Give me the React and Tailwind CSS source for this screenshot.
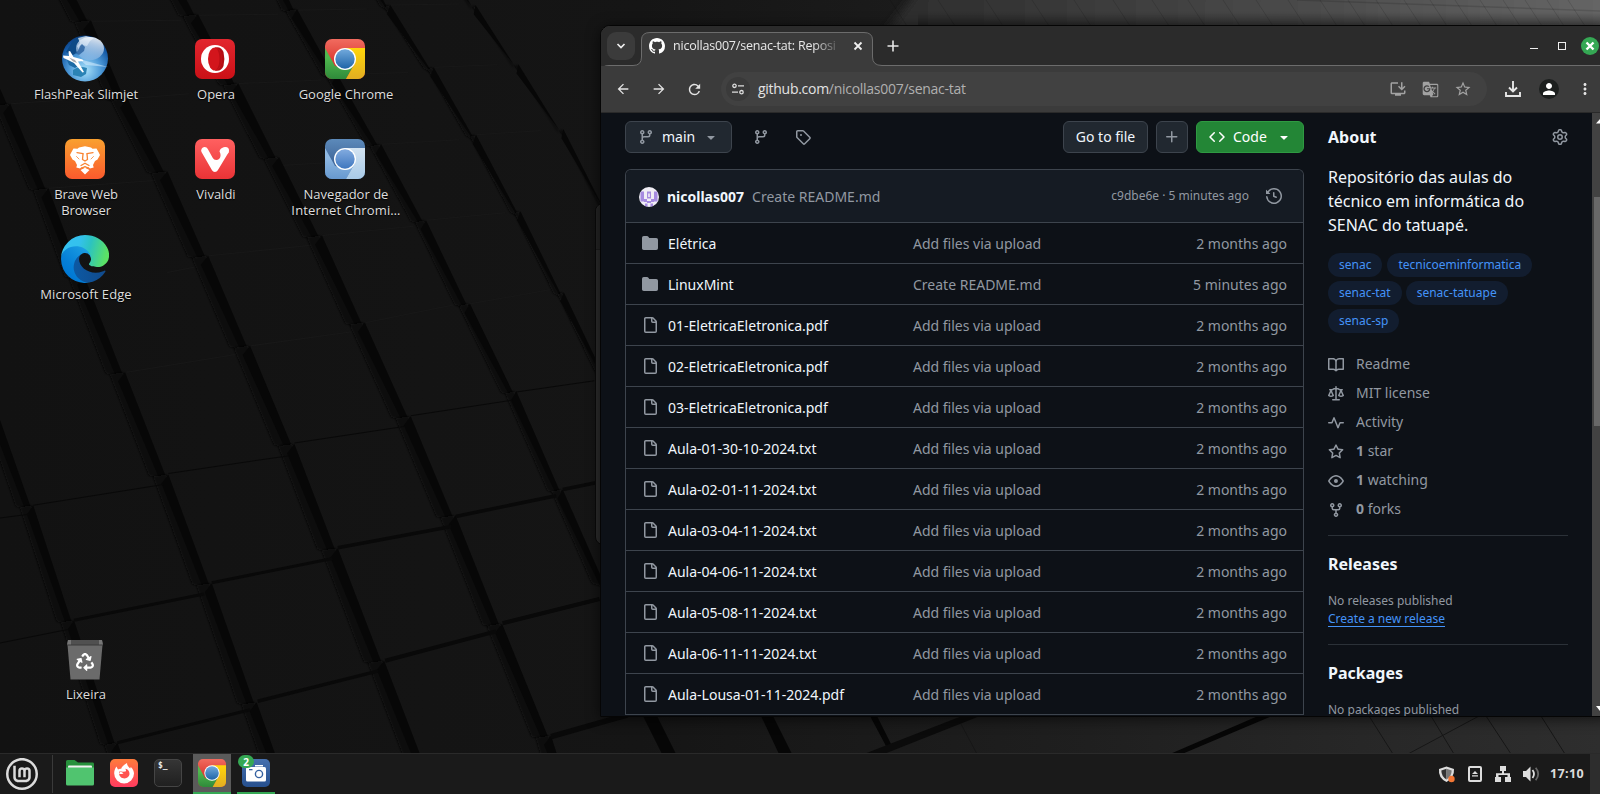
import React from "react";
import { MdArrowBack, MdArrowForward, MdRefresh, MdGTranslate, MdInstallDesktop, MdStarBorder, MdPerson, MdMoreVert } from "react-icons/md";
import { FaRecycle } from "react-icons/fa";
import { SiLinuxmint } from "react-icons/si";

const octicons = {
  branch: "M9.5 3.25a2.25 2.25 0 1 1 3 2.122V6A2.5 2.5 0 0 1 10 8.5H6a1 1 0 0 0-1 1v1.128a2.251 2.251 0 1 1-1.5 0V5.372a2.25 2.25 0 1 1 1.5 0v1.836A2.493 2.493 0 0 1 6 7h4a1 1 0 0 0 1-1v-.628A2.25 2.25 0 0 1 9.5 3.25Zm-6 0a.75.75 0 1 0 1.5 0 .75.75 0 0 0-1.5 0Zm8.25-.75a.75.75 0 1 0 0 1.5.75.75 0 0 0 0-1.5ZM4.25 12a.75.75 0 1 0 0 1.5.75.75 0 0 0 0-1.5Z",
  tag: "M1 7.775V2.75C1 1.784 1.784 1 2.75 1h5.025c.464 0 .91.184 1.238.513l6.25 6.25a1.75 1.75 0 0 1 0 2.474l-5.026 5.026a1.75 1.75 0 0 1-2.474 0l-6.25-6.25A1.752 1.752 0 0 1 1 7.775Zm1.5 0c0 .066.026.13.073.177l6.25 6.25a.25.25 0 0 0 .354 0l5.025-5.025a.25.25 0 0 0 0-.354l-6.25-6.25a.25.25 0 0 0-.177-.073H2.75a.25.25 0 0 0-.25.25ZM6 5a1 1 0 1 1 0 2 1 1 0 0 1 0-2Z",
  plus: "M7.75 2a.75.75 0 0 1 .75.75V7h4.25a.75.75 0 0 1 0 1.5H8.5v4.25a.75.75 0 0 1-1.5 0V8.5H2.75a.75.75 0 0 1 0-1.5H7V2.75A.75.75 0 0 1 7.75 2Z",
  code: "m11.28 3.22 4.25 4.25a.75.75 0 0 1 0 1.06l-4.25 4.25a.749.749 0 0 1-1.275-.326.749.749 0 0 1 .215-.734L13.94 8l-3.72-3.72a.749.749 0 0 1 .326-1.275.749.749 0 0 1 .734.215Zm-6.56 0a.751.751 0 0 1 1.042.018.751.751 0 0 1 .018 1.042L2.06 8l3.72 3.72a.749.749 0 0 1-.326 1.275.749.749 0 0 1-.734-.215L.47 8.53a.75.75 0 0 1 0-1.06Z",
  down: "m4.427 7.427 3.396 3.396a.25.25 0 0 0 .354 0l3.396-3.396A.25.25 0 0 0 11.396 7H4.604a.25.25 0 0 0-.177.427Z",
  history: "m.427 1.927 1.215 1.215a8.002 8.002 0 1 1-1.6 5.685.75.75 0 1 1 1.493-.154 6.5 6.5 0 1 0 1.18-4.458l1.358 1.358A.25.25 0 0 1 3.896 6H.25A.25.25 0 0 1 0 5.75V2.104a.25.25 0 0 1 .427-.177ZM7.75 4a.75.75 0 0 1 .75.75v2.992l2.028.812a.75.75 0 0 1-.557 1.392l-2.5-1A.751.751 0 0 1 7 8.25v-3.5A.75.75 0 0 1 7.75 4Z",
  dir: "M1.75 1A1.75 1.75 0 0 0 0 2.75v10.5C0 14.216.784 15 1.75 15h12.5A1.75 1.75 0 0 0 16 13.25v-8.5A1.75 1.75 0 0 0 14.25 3H7.5a.25.25 0 0 1-.2-.1l-.9-1.2C6.07 1.26 5.55 1 5 1H1.75Z",
  file: "M2 1.75C2 .784 2.784 0 3.75 0h6.586c.464 0 .909.184 1.237.513l2.914 2.914c.329.328.513.773.513 1.237v9.586A1.75 1.75 0 0 1 13.25 16h-9.5A1.75 1.75 0 0 1 2 14.25Zm1.75-.25a.25.25 0 0 0-.25.25v12.5c0 .138.112.25.25.25h9.5a.25.25 0 0 0 .25-.25V6h-2.75A1.75 1.75 0 0 1 9 4.25V1.5Zm6.75.062V4.25c0 .138.112.25.25.25h2.688l-.011-.013-2.914-2.914-.013-.011Z",
  gear: "M8 0a8.2 8.2 0 0 1 .701.031C9.444.095 9.99.645 10.16 1.29l.288 1.107c.018.066.079.158.212.224.231.114.454.243.668.386.123.082.233.09.299.071l1.103-.303c.644-.176 1.392.021 1.82.63.27.385.506.792.704 1.218.315.675.111 1.422-.364 1.891l-.814.806c-.049.048-.098.147-.088.294.016.257.016.515 0 .772-.01.147.038.246.088.294l.814.806c.475.469.679 1.216.364 1.891a7.977 7.977 0 0 1-.704 1.217c-.428.61-1.176.807-1.82.63l-1.102-.302c-.067-.019-.177-.011-.3.071a5.909 5.909 0 0 1-.668.386c-.133.066-.194.158-.211.224l-.29 1.106c-.168.646-.715 1.196-1.458 1.26a8.006 8.006 0 0 1-1.402 0c-.743-.064-1.289-.614-1.458-1.26l-.289-1.106c-.018-.066-.079-.158-.212-.224a5.738 5.738 0 0 1-.668-.386c-.123-.082-.233-.09-.299-.071l-1.103.303c-.644.176-1.392-.021-1.82-.63a8.12 8.12 0 0 1-.704-1.218c-.315-.675-.111-1.422.363-1.891l.815-.806c.05-.048.098-.147.088-.294a6.214 6.214 0 0 1 0-.772c.01-.147-.038-.246-.088-.294l-.815-.806C.635 6.045.431 5.298.746 4.623a7.92 7.92 0 0 1 .704-1.217c.428-.61 1.176-.807 1.82-.63l1.102.302c.067.019.177.011.3-.071.214-.143.437-.272.668-.386.133-.066.194-.158.211-.224l.29-1.106C6.009.645 6.556.095 7.299.03 7.53.01 7.764 0 8 0Zm-.571 1.525c-.036.003-.108.036-.137.146l-.289 1.105c-.147.561-.549.967-.998 1.189-.173.086-.34.183-.5.29-.417.278-.97.423-1.529.27l-1.103-.303c-.109-.03-.175.016-.195.045-.22.312-.412.644-.573.99-.014.031-.021.11.059.19l.815.806c.411.406.562.957.53 1.456a4.709 4.709 0 0 0 0 .582c.032.499-.119 1.05-.53 1.456l-.815.806c-.081.08-.073.159-.059.19.162.346.353.677.573.989.02.03.085.076.195.046l1.102-.303c.56-.153 1.113-.008 1.53.27.161.107.328.204.501.29.447.222.85.629.997 1.189l.289 1.105c.029.109.101.143.137.146a6.6 6.6 0 0 0 1.142 0c.036-.003.108-.036.137-.146l.289-1.105c.147-.561.549-.967.998-1.189.173-.086.34-.183.5-.29.417-.278.97-.423 1.529-.27l1.103.303c.109.029.175-.016.195-.045.22-.313.411-.644.573-.99.014-.031.021-.11-.059-.19l-.815-.806c-.411-.406-.562-.957-.53-1.456a4.709 4.709 0 0 0 0-.582c-.032-.499.119-1.05.53-1.456l.815-.806c.081-.08.073-.159.059-.19a6.464 6.464 0 0 0-.573-.989c-.02-.03-.085-.076-.195-.046l-1.102.303c-.56.153-1.113.008-1.53-.27a4.44 4.44 0 0 0-.501-.29c-.447-.222-.85-.629-.997-1.189l-.289-1.105c-.029-.11-.101-.143-.137-.146a6.6 6.6 0 0 0-1.142 0ZM11 8a3 3 0 1 1-6 0 3 3 0 0 1 6 0ZM9.5 8a1.5 1.5 0 1 0-3.001.001A1.5 1.5 0 0 0 9.5 8Z",
  book: "M0 1.75A.75.75 0 0 1 .75 1h4.253c1.227 0 2.317.59 3 1.501A3.743 3.743 0 0 1 11.006 1h4.245a.75.75 0 0 1 .75.75v10.5a.75.75 0 0 1-.75.75h-4.507a2.25 2.25 0 0 0-1.591.659l-.622.621a.75.75 0 0 1-1.06 0l-.622-.621A2.25 2.25 0 0 0 5.258 13H.75a.75.75 0 0 1-.75-.75Zm7.251 10.324.004-5.073-.002-2.253A2.25 2.25 0 0 0 5.003 2.5H1.5v9h3.757a3.75 3.75 0 0 1 1.994.574ZM8.755 4.75l-.004 7.322a3.752 3.752 0 0 1 1.992-.572H14.5v-9h-3.495a2.25 2.25 0 0 0-2.25 2.25Z",
  law: "M8.75.75V2h.985c.304 0 .603.08.867.231l1.29.736c.038.022.08.033.124.033h2.234a.75.75 0 0 1 0 1.5h-.427l2.111 4.692a.75.75 0 0 1-.154.838l-.53-.53.529.531-.001.002-.002.002-.006.006-.006.005-.01.01-.045.04c-.21.176-.441.327-.686.45C14.556 10.78 13.88 11 13 11a4.498 4.498 0 0 1-2.023-.454 3.544 3.544 0 0 1-.686-.45l-.045-.04-.016-.015-.006-.006-.004-.004v-.001a.75.75 0 0 1-.154-.838L12.178 4.5h-.162c-.305 0-.604-.079-.868-.231l-1.29-.736a.245.245 0 0 0-.124-.033H8.75V13h2.5a.75.75 0 0 1 0 1.5h-6.5a.75.75 0 0 1 0-1.5h2.5V3.5h-.984a.245.245 0 0 0-.124.033l-1.289.737c-.265.15-.564.23-.869.23h-.162l2.112 4.692a.75.75 0 0 1-.154.838l-.53-.53.529.531-.001.002-.002.002-.006.006-.016.015-.045.04c-.21.176-.441.327-.686.45C4.556 10.78 3.88 11 3 11a4.498 4.498 0 0 1-2.023-.454 3.544 3.544 0 0 1-.686-.45l-.045-.04-.016-.015-.006-.006-.004-.004v-.001a.75.75 0 0 1-.154-.838L2.178 4.5H1.75a.75.75 0 0 1 0-1.5h2.234a.249.249 0 0 0 .125-.033l1.288-.737c.265-.15.564-.23.869-.23h.984V.75a.75.75 0 0 1 1.5 0Zm2.945 8.477c.285.135.718.273 1.305.273s1.02-.138 1.305-.273L13 6.327Zm-10 0c.285.135.718.273 1.305.273s1.02-.138 1.305-.273L3 6.327Z",
  pulse: "M6 2c.306 0 .582.187.696.471L10 10.731l1.304-3.26A.751.751 0 0 1 12 7h3.25a.75.75 0 0 1 0 1.5h-2.742l-1.812 4.528a.751.751 0 0 1-1.392 0L6 4.77 4.696 8.03A.75.75 0 0 1 4 8.5H.75a.75.75 0 0 1 0-1.5h2.742l1.812-4.529A.751.751 0 0 1 6 2Z",
  star: "M8 .25a.75.75 0 0 1 .673.418l1.882 3.815 4.21.612a.75.75 0 0 1 .416 1.279l-3.046 2.97.719 4.192a.751.751 0 0 1-1.088.791L8 12.347l-3.766 1.98a.75.75 0 0 1-1.088-.79l.72-4.194L.818 6.374a.75.75 0 0 1 .416-1.28l4.21-.611L7.327.668A.75.75 0 0 1 8 .25Zm0 2.445L6.615 5.5a.75.75 0 0 1-.564.41l-3.097.45 2.24 2.184a.75.75 0 0 1 .216.664l-.528 3.084 2.769-1.456a.75.75 0 0 1 .698 0l2.77 1.456-.53-3.084a.75.75 0 0 1 .216-.664l2.24-2.183-3.096-.45a.75.75 0 0 1-.564-.41L8 2.694Z",
  eye: "M8 2c1.981 0 3.671.992 4.933 2.078 1.27 1.091 2.187 2.345 2.637 3.023a1.62 1.62 0 0 1 0 1.798c-.45.678-1.367 1.932-2.637 3.023C11.67 13.008 9.981 14 8 14c-1.981 0-3.671-.992-4.933-2.078C1.797 10.83.88 9.576.43 8.898a1.62 1.62 0 0 1 0-1.798c.45-.677 1.367-1.931 2.637-3.022C4.33 2.992 6.019 2 8 2ZM1.679 7.932a.12.12 0 0 0 0 .136c.411.622 1.241 1.75 2.366 2.717C5.176 11.758 6.527 12.5 8 12.5c1.473 0 2.825-.742 3.955-1.715 1.124-.967 1.954-2.096 2.366-2.717a.12.12 0 0 0 0-.136c-.412-.621-1.242-1.75-2.366-2.717C10.824 4.242 9.473 3.5 8 3.5c-1.473 0-2.825.742-3.955 1.715-1.124.967-1.954 2.096-2.366 2.717ZM8 10a2 2 0 1 1-.001-3.999A2 2 0 0 1 8 10Z",
  fork: "M5 5.372v.878c0 .414.336.75.75.75h4.5a.75.75 0 0 0 .75-.75v-.878a2.25 2.25 0 1 1 1.5 0v.878a2.25 2.25 0 0 1-2.25 2.25h-1.5v2.128a2.251 2.251 0 1 1-1.5 0V8.5h-1.5A2.25 2.25 0 0 1 3.5 6.25v-.878a2.25 2.25 0 1 1 1.5 0ZM5 3.25a.75.75 0 1 0-1.5 0 .75.75 0 0 0 1.5 0Zm6.75.75a.75.75 0 1 0 0-1.5.75.75 0 0 0 0 1.5Zm-3 8.75a.75.75 0 1 0-1.5 0 .75.75 0 0 0 1.5 0Z",
  github: "M8 0c4.42 0 8 3.58 8 8a8.013 8.013 0 0 1-5.45 7.59c-.4.08-.55-.17-.55-.38 0-.27.01-1.13.01-2.2 0-.75-.25-1.23-.54-1.48 1.78-.2 3.65-.88 3.65-3.95 0-.88-.31-1.59-.82-2.15.08-.2.36-1.02-.08-2.12 0 0-.67-.22-2.2.82-.64-.18-1.32-.27-2-.27-.68 0-1.36.09-2 .27-1.53-1.03-2.2-.82-2.2-.82-.44 1.1-.16 1.92-.08 2.12-.51.56-.82 1.28-.82 2.15 0 3.06 1.86 3.75 3.64 3.95-.23.2-.44.55-.51 1.07-.46.21-1.61.55-2.33-.66-.15-.24-.6-.83-1.23-.82-.67.01-.27.38.01.53.34.19.73.9.82 1.13.16.45.68 1.31 2.69.94 0 .67.01 1.3.01 1.49 0 .21-.15.45-.55.38A7.995 7.995 0 0 1 0 8c0-4.42 3.58-8 8-8Z",
};

function Oct({ name, className = "" }) {
  return (
    <svg viewBox="0 0 16 16" className={`size-4 shrink-0 fill-current ${className}`}>
      <path d={octicons[name]} />
    </svg>
  );
}

/* ---------- wallpaper ---------- */

const ridges = [
  [[-75, 640], [-5, 815], [65, 998], [145, 1225], [230, 1467], [270, 1560]],
  [[-50, 60], [20, 205], [95, 372], [165, 545], [245, 735], [330, 937], [415, 1152], [503, 1387], [560, 1530]],
  [[105, -90], [178, 40], [250, 195], [328, 338], [408, 505], [490, 683], [577, 877], [662, 1083], [753, 1305], [845, 1530]],
  [[325, -80], [388, 28], [467, 165], [547, 310], [631, 465], [715, 637], [805, 822], [893, 1018], [984, 1232], [1080, 1453], [1110, 1530]],
  [[520, -100], [582, 18], [661, 147], [747, 285], [835, 435], [921, 600], [1012, 773], [1103, 967], [1190, 1150]],
  [[695, -100], [765, 10], [850, 133], [933, 266], [1020, 417], [1105, 577], [1190, 740]],
  [[865, -90], [932, 10], [1016, 127], [1104, 255], [1190, 410]],
];
const ridgeWidths = [30, 34, 36, 34, 26, 16, 9];

const seams = [
  [65, 998, 320, 957, 2], [330, 935, 567, 900, 2], [577, 875, 795, 842, 2], [805, 821, 1005, 790, 2], [1012, 774, 1165, 752, 2],
  [0, 1023, 60, 1015, 2], [0, 1270, 135, 1243, 2],
  [145, 1225, 400, 1173, 6], [415, 1151, 652, 1103, 6], [662, 1082, 885, 1040, 7], [893, 1020, 1090, 979, 7], [1103, 967, 1175, 952, 7],
  [230, 1467, 490, 1402, 6], [505, 1385, 742, 1325, 7], [755, 1305, 972, 1247, 8], [985, 1231, 1175, 1183, 8], [1080, 1455, 1230, 1412, 11],
];

const lips = [
  [22, 205, 130, 197], [96, 372, 310, 356], [180, 42, 355, 40], [250, 195, 370, 185], [390, 30, 545, 28], [468, 165, 630, 158],
  [585, 20, 720, 18], [662, 147, 800, 143], [767, 10, 900, 8], [852, 133, 975, 128], [935, 266, 1060, 258], [748, 285, 900, 276],
  [548, 327, 700, 318], [410, 505, 615, 484], [632, 465, 810, 447], [836, 435, 990, 420], [718, 637, 900, 600], [922, 600, 1080, 572],
  [492, 683, 690, 655], [248, 735, 480, 697], [328, 538, 385, 527],
];

const topLines = [890, 938, 986, 1032, 1074, 1113, 1152, 1188, 1223, 1256, 1288, 1320, 1348, 1376, 1404, 1430, 1455, 1480, 1503, 1525, 1547, 1568];

function Wallpaper() {
  return (
    <svg className="absolute inset-0" width="1600" height="794" viewBox="0 0 1600 794">
      <defs>
        <linearGradient id="wpBase" x1="0" y1="0" x2="1" y2="0">
          <stop offset="0" stopColor="#121212" />
          <stop offset=".4" stopColor="#151515" />
          <stop offset=".68" stopColor="#1f1f1f" />
          <stop offset="1" stopColor="#2e2e2e" />
        </linearGradient>
        <linearGradient id="wpTop" x1="0" y1="0" x2="1" y2="0">
          <stop offset="0" stopColor="#2c2c2c" />
          <stop offset=".55" stopColor="#494949" />
          <stop offset="1" stopColor="#666" />
        </linearGradient>
        <linearGradient id="wpShade" x1="0" y1="0" x2="0" y2="1">
          <stop offset="0" stopColor="#000" stopOpacity="0" />
          <stop offset="1" stopColor="#000" stopOpacity=".3" />
        </linearGradient>
        <filter id="soft"><feGaussianBlur stdDeviation="2.4" /></filter>
        <filter id="softer"><feGaussianBlur stdDeviation="5" /></filter>
      </defs>
      <rect width="1600" height="794" fill="url(#wpBase)" />
      <g transform="scale(.5102 .5063)">
        {lips.map((l, i) => (
          <line key={i} x1={l[0]} y1={l[1]} x2={l[2]} y2={l[3]} stroke="#181818" strokeWidth="2" />
        ))}
        {ridges.map((pts, r) =>
          pts.slice(0, -1).map((p, i) => {
            const q = pts[i + 1];
            const w = ridgeWidths[r];
            return (
              <g key={`${r}-${i}`}>
                <polygon
                  points={`${p[0] - 4},${p[1]} ${q[0] - 6},${q[1] + 10} ${q[0] - w - 4},${q[1] + 2} ${p[0] - w + 4},${p[1] + 4}`}
                  fill="#0a0a0a"
                  filter="url(#soft)"
                />
                <polygon
                  points={`${p[0]},${p[1]} ${q[0] - 2},${q[1] + 12} ${q[0] - w * 0.55},${q[1] + 6} ${p[0] - w * 0.4},${p[1] + 18}`}
                  fill="#070707"
                />
              </g>
            );
          })
        )}
        {seams.map((s, i) => (
          <line key={i} x1={s[0]} y1={s[1]} x2={s[2]} y2={s[3]} stroke="#090909" strokeWidth={s[4]} />
        ))}
      </g>
      <polygon points="918,-10 1610,-10 1610,40 880,40" fill="url(#wpTop)" filter="url(#softer)" />
      <g stroke="#000" strokeOpacity=".13">
        {topLines.map((x) => <line key={x} x1={x} y1="0" x2={x + 17} y2="26" />)}
        <line x1="1297" y1="0" x2="1600" y2="11" strokeWidth="1.5" />
      </g>
      <rect x="918" y="12" width="682" height="14" fill="url(#wpShade)" />
      <g fill="#060606">
        <polygon points="643,716 657,716 676,754 662,754" />
        <polygon points="761,716 773,716 792,754 779,754" />
        <polygon points="870,716 877,716 891,744 886,746" />
        <polygon points="1170,754 1258,716 1272,716 1182,754" />
        <polygon points="864,754 962,716 980,716 884,754" fill="#0b0b0b" />
      </g>
      <g stroke="#161616">
        <line x1="961" y1="724" x2="977" y2="754" />
        <line x1="1369" y1="716" x2="1393" y2="754" />
        <line x1="1431" y1="716" x2="1454" y2="754" />
        <line x1="1486" y1="716" x2="1511" y2="754" />
        <line x1="1541" y1="716" x2="1565" y2="754" />
        <line x1="1408" y1="754" x2="1479" y2="716" />
      </g>
    </svg>
  );
}

/* ---------- application icons ---------- */

function ChromeIcon({ id, className, c }) {
  return (
    <svg viewBox="0 0 40 40" className={className}>
      <defs>
        <clipPath id={`${id}c`}><rect width="40" height="40" rx="7" /></clipPath>
        <linearGradient id={`${id}t`} x2="0" y2="1"><stop stopColor={c[0]} /><stop offset=".6" stopColor={c[1]} /></linearGradient>
        <linearGradient id={`${id}l`} x2="0" y2="1"><stop offset=".3" stopColor={c[2]} /><stop offset="1" stopColor={c[3]} /></linearGradient>
        <linearGradient id={`${id}r`} x2="0" y2="1"><stop stopColor={c[4]} /><stop offset="1" stopColor={c[5]} /></linearGradient>
        <linearGradient id={`${id}b`} x2="0" y2="1"><stop stopColor={c[6]} /><stop offset="1" stopColor={c[7]} /></linearGradient>
      </defs>
      <g clipPath={`url(#${id}c)`}>
        <rect width="40" height="40" fill={`url(#${id}t)`} />
        <path d="M0 9 10 27 20 29 29 26 21 40H0Z" fill={`url(#${id}l)`} />
        <path d="M20 9H40V40H21L30 24Z" fill={`url(#${id}r)`} />
      </g>
      <circle cx="20" cy="20" r="11" fill="#fff" />
      <circle cx="20" cy="20" r="9.7" fill={`url(#${id}b)`} />
    </svg>
  );
}
const chromeColors = ["#f16b5f", "#d9372f", "#4fb84e", "#2f8a3a", "#ffd60a", "#e2ae22", "#71a9dc", "#1f65a8"];
const chromiumColors = ["#5c8aba", "#3f6699", "#8fb8e2", "#6799cf", "#d3e3f1", "#a9cbe8", "#82abdf", "#3f77bf"];

function SlimjetIcon() {
  return (
    <svg viewBox="0 0 48 48" className="size-12">
      <defs>
        <radialGradient id="sj" cx=".5" cy=".75" r=".75">
          <stop stopColor="#a9e2fb" /><stop offset=".45" stopColor="#4f9bd8" /><stop offset=".8" stopColor="#1459a5" /><stop offset="1" stopColor="#0b3c7d" />
        </radialGradient>
        <linearGradient id="sjg" x1=".8" y1="0" x2=".5" y2="1"><stop stopColor="#fff" stopOpacity=".9" /><stop offset="1" stopColor="#8db7e4" stopOpacity=".55" /></linearGradient>
      </defs>
      <circle cx="24" cy="23.500" r="23" fill="url(#sj)" />
      <path d="M11 7Q16 2 24 1L23 8 20 11 17 17 12 20 5 17Z" fill="#0d4a86" />
      <path d="M17 3l8-2 8 2-4 3-3 5-5-1-3 5-2-4 3-3Z" fill="#e9f1fa" opacity=".75" />
      <ellipse cx="29" cy="13.500" rx="14" ry="11.500" fill="url(#sjg)" />
      <path d="M21 9l3 3-1 4-5 4-4-2 3-2 2-5Z" fill="#275f9e" opacity=".8" />
      <path d="M12 35q6-5 14-2l-1 6-5 3-8-2Z" fill="#2b83b5" />
      <path d="M6 25l6 1 5 5-3 2-6-3Z" fill="#1d6aa5" />
      <path d="M18 24 47 32 25 30Z" fill="#d7efff" opacity=".55" />
      <path d="M2 20.500l6 .5-.5-4.500 1.500-.5 3.500 6 9 2.500 1 1.500-5.500.5 6 10.500-1.500.5-8.500-9.500-7-3.500-3.500-1.500Z" fill="#fff" />
      <path d="M8 22.500l6 2.500 2 3-4-1.500Z" fill="#a9abb0" />
    </svg>
  );
}

function OperaIcon() {
  return (
    <svg viewBox="0 0 40 40" className="size-10">
      <defs><linearGradient id="op" x2="0" y2="1"><stop stopColor="#e2262e" /><stop offset="1" stopColor="#cb1017" /></linearGradient></defs>
      <rect width="40" height="40" rx="7" fill="url(#op)" />
      <circle cx="20" cy="20" r="14" fill="#fff" />
      <path d="M20 8.500q6-1.500 8.500 4.500 1.800 7 0 14-2.500 6-8.500 4.500Z" fill="#b30d14" />
      <ellipse cx="20" cy="20" rx="7" ry="11.500" fill="#d3151c" />
      <path d="M20 8.500C26 10.500 26 29.500 20 31.500 29 30 29 10 20 8.500Z" fill="#b90e15" />
    </svg>
  );
}

function BraveIcon() {
  return (
    <svg viewBox="0 0 40 40" className="size-10">
      <defs><linearGradient id="bv" x2="0" y2="1"><stop stopColor="#f9a02f" /><stop offset="1" stopColor="#fb5a2d" /></linearGradient></defs>
      <rect width="40" height="40" rx="7" fill="url(#bv)" />
      <path d="M14 8.500 20 7.200l6 1.300 1.500 1.200 4-.3L33.500 13l1.500 3-2.500 4.500L30 22l-2 4 .7 2.500L25 29.500l-2-1.500-3 1.200-3-1.200-2 1.500-3.700-1L12 26l-2-4-2.500-1.500L5 16l1.500-3 2-3.600 4 .3Z" fill="#fff" />
      <path d="M20 28.700 24.500 31 20 35.500 15.500 31Z" fill="#fff" />
      <g fill="none" stroke="#f98431" strokeWidth="1.300" strokeLinecap="round" strokeLinejoin="round">
        <path d="M12 13.700 18 14.600M28 13.700 22 14.600" />
        <path d="M18 15 17.500 20.500 20 22 22.500 20.500 22 15" />
        <path d="M16 26.500 20 24.200 24 26.500" />
        <path d="M16.300 29.300 20 27.700 23.700 29.300" />
        <path d="M11.500 17.500 14 20M28.500 17.500 26 20" strokeWidth=".8" />
      </g>
    </svg>
  );
}

function VivaldiIcon() {
  return (
    <svg viewBox="0 0 40 40" className="size-10">
      <defs><linearGradient id="vv" x2="0" y2="1"><stop stopColor="#ff6060" /><stop offset="1" stopColor="#ea3336" /></linearGradient></defs>
      <rect width="40" height="40" rx="7" fill="url(#vv)" />
      <path d="M9.500 8a3.500 3.500 0 0 1 3.300 2l4.700 8.500c2 4 7.500 3 8-1.500.2-2-.3-3-1-4.500a3.600 3.600 0 1 1 9 1L22.800 31.300a3.300 3.300 0 0 1-5.800 0L6.500 13A3.500 3.500 0 0 1 9.500 8Z" fill="#fff" />
      <circle cx="30.500" cy="11.500" r="3.500" fill="#fff" />
    </svg>
  );
}

function EdgeIcon() {
  return (
    <svg viewBox="0 0 256 256" className="size-12">
      <defs>
        <linearGradient id="e1" x1="63" x2="242" y1="177" y2="177" gradientUnits="userSpaceOnUse"><stop stopColor="#0c59a4" /><stop offset="1" stopColor="#114a8b" /></linearGradient>
        <linearGradient id="e2" x1="157" x2="46" y1="101" y2="222" gradientUnits="userSpaceOnUse"><stop stopColor="#1b9de2" /><stop offset=".16" stopColor="#1595df" /><stop offset=".67" stopColor="#0680d7" /><stop offset="1" stopColor="#0078d4" /></linearGradient>
        <linearGradient id="e3" x1="10" x2="240" y1="50" y2="110" gradientUnits="userSpaceOnUse"><stop stopColor="#35c1f1" /><stop offset=".35" stopColor="#34c1ed" /><stop offset=".6" stopColor="#2cc3c0" /><stop offset="1" stopColor="#5be265" /></linearGradient>
      </defs>
      <path d="M231 190.500c-3.400 1.800-6.900 3.400-10.500 4.700a101 101 0 0 1-35.900 6.400c-47.300 0-88.500-32.500-88.500-74.300a31.500 31.500 0 0 1 16.400-27.300c-42.800 1.800-53.800 46.400-53.800 72.500 0 74 68.100 81.400 82.800 81.400 7.900 0 19.800-2.300 27-4.600l1.300-.4a128.300 128.300 0 0 0 66.600-52.800 4 4 0 0 0-5.400-5.600z" fill="url(#e1)" />
      <path d="M105.700 241.400a79.200 79.200 0 0 1-22.700-21.300 80.700 80.700 0 0 1 29.500-120c3.200-1.500 8.500-4.100 15.600-4a32.400 32.400 0 0 1 25.700 13 31.900 31.900 0 0 1 6.300 18.700c0-.2 24.500-79.600-80-79.600-43.900 0-80 41.600-80 78.200a130.200 130.200 0 0 0 12.100 56 128 128 0 0 0 156.400 67.100 75.500 75.500 0 0 1-62.800-8z" fill="url(#e2)" />
      <path d="M152.300 148.900c-.9 1-3.400 2.500-3.400 5.600 0 2.600 1.700 5.200 4.800 7.300 14.400 10.100 41.700 8.700 41.800 8.700 10.700 0 21.300-2.900 30.500-8.300a61.900 61.900 0 0 0 30.500-53.400c.3-22.400-8-37.300-11.300-43.900C223.900 23.500 177.700 0 127.900 0A128 128 0 0 0 0 126.200c.5-36.500 36.800-66 80-66 3.500 0 23.500.3 42 10.100 16.300 8.600 24.900 18.900 30.800 29.200 6.200 10.700 7.300 24.100 7.300 29.500 0 5.300-2.700 13.300-7.800 19.900z" fill="url(#e3)" />
    </svg>
  );
}

function TrashIcon() {
  return (
    <div className="relative flex h-[41px] w-9 justify-center">
      <svg viewBox="0 0 36 41" className="absolute inset-0 h-[41px] w-9">
        <path d="M1 1h34l1 5H0Z" fill="#505050" /><path d="M1 1h3v5H0Z M35 1h-3v5h4Z" fill="#767676" />
        <path d="M.5 6h35L32.500 40.500h-29Z" fill="#6b6b6b" /><path d="M0 6h36" stroke="#3a3a3a" />
      </svg>
      <FaRecycle className="relative mt-[14px] size-[18px] text-white" />
    </div>
  );
}

function DesktopItem({ pos, icon, lines }) {
  return (
    <div className={`absolute flex w-[130px] flex-col items-center ${pos}`}>
      <div className="flex h-12 items-center">{icon}</div>
      <div className="mt-[3px] flex flex-col items-center">
        {lines.map(([t, cls]) => (
          <span key={t} className={`ml-[2px] h-4 text-[13px] leading-4 whitespace-nowrap text-[#dedede] [text-shadow:0_1px_1px_#000] ${cls}`}>{t}</span>
        ))}
      </div>
    </div>
  );
}

/* ---------- browser window ---------- */

function TabStrip() {
  return (
    <div className="relative flex h-10 shrink-0 rounded-tl-[9px] bg-[#2b2b2b]">
      <div className="mt-[6px] ml-[6px] flex size-7 items-center justify-center rounded-[9px] bg-[#3b3b3b]">
        <svg viewBox="0 0 10 10" className="size-[10px]"><path d="M1.500 3 5 6.500 8.500 3" fill="none" stroke="#eee" strokeWidth="1.700" /></svg>
      </div>
      <svg className="absolute top-[5px] left-0 h-[35px] w-full" viewBox="0 0 999 35">
        <path d="M0 41V41Q0 34.500 8 34.500H32Q40.500 34.500 40.500 26V9Q40.500 1.500 49 1.500H263Q271.500 1.500 271.500 9V26Q271.500 34.500 281 34.500H999V41Z" fill="#3b3b3b" stroke="#6c6c6c" />
      </svg>
      <div className="relative ml-[9px] flex h-9 w-[222px] items-center pt-[4px] text-[#e8e8e8]">
        <Oct name="github" className="ml-[5px] text-white" />
        <span className="ml-2 w-[169px] text-[12.5px] leading-5 tracking-[-0.2px] whitespace-nowrap [mask-image:linear-gradient(to_right,#000_140px,transparent_169px)]">nicollas007/senac-tat: Reposi</span>
        <svg viewBox="0 0 10 10" className="ml-[11px] size-[10px]"><path d="M1.500 1.500l7 7M8.500 1.500l-7 7" stroke="#eee" strokeWidth="1.800" /></svg>
      </div>
      <svg viewBox="0 0 12 12" className="relative mt-[14px] ml-[21px] size-3"><path d="M6 .5v11M.5 6h11" stroke="#e8e8e8" strokeWidth="1.600" /></svg>
      <div className="relative ml-auto flex items-center">
        <span className="mt-[5px] h-px w-2 bg-[#eee]" />
        <span className="ml-5 size-2 border border-[#eee]" />
        <span className="mr-[1px] ml-[15px] flex size-[18px] items-center justify-center rounded-full bg-[#35a854]">
          <svg viewBox="0 0 10 10" className="size-[10px]"><path d="M1.500 1.500l7 7M8.500 1.500l-7 7" stroke="#fff" strokeWidth="2.400" /></svg>
        </span>
      </div>
    </div>
  );
}

function Toolbar() {
  return (
    <div className="flex h-[47px] shrink-0 items-center border-b border-[#2a2a2a] bg-[#3b3b3b] text-[#e4e4e4]">
      <MdArrowBack className="ml-[14px] size-4" />
      <MdArrowForward className="ml-5 size-4" />
      <MdRefresh className="ml-[19px] size-[17px]" />
      <div className="ml-[18px] flex h-[34px] w-[766px] items-center rounded-full bg-[#414141]">
        <span className="ml-[5px] flex size-6 items-center justify-center rounded-full bg-[#3a3a3a]">
          <svg viewBox="0 0 12 12" className="size-3" fill="none" stroke="#ddd" strokeWidth="1.300"><circle cx="2.500" cy="2.800" r="1.700" /><path d="M6 2.800h6M0 9.200h6" /><circle cx="9.500" cy="9.200" r="1.700" /></svg>
        </span>
        <span className="ml-[8px] pb-[2px] text-[14px] tracking-[-0.28px] whitespace-nowrap text-[#b0b0b0]"><span className="text-[#e3e3e3]">github.com</span>/nicollas007/senac-tat</span>
        <div className="mr-[15px] ml-auto flex items-center gap-[15px] text-[#a2a2a2]">
          <MdInstallDesktop className="size-[18px]" />
          <MdGTranslate className="size-[17px]" />
          <MdStarBorder className="size-[18px]" />
        </div>
      </div>
      <svg viewBox="0 0 16 16" className="ml-[18px] size-4" fill="none" stroke="#e6e6e6" strokeWidth="1.900"><path d="M8 0v10M4 6.500l4 4 4-4M1 11v4h14v-4" /></svg>
      <span className="ml-[18px] flex size-5 items-center justify-center rounded-full bg-[#1c1f1e]"><MdPerson className="size-[18px] text-white" /></span>
      <MdMoreVert className="ml-[17px] size-[18px]" />
    </div>
  );
}

const rows = [
  ["dir", "Elétrica", "Add files via upload", "2 months ago"],
  ["dir", "LinuxMint", "Create README.md", "5 minutes ago"],
  ["file", "01-EletricaEletronica.pdf", "Add files via upload", "2 months ago"],
  ["file", "02-EletricaEletronica.pdf", "Add files via upload", "2 months ago"],
  ["file", "03-EletricaEletronica.pdf", "Add files via upload", "2 months ago"],
  ["file", "Aula-01-30-10-2024.txt", "Add files via upload", "2 months ago"],
  ["file", "Aula-02-01-11-2024.txt", "Add files via upload", "2 months ago"],
  ["file", "Aula-03-04-11-2024.txt", "Add files via upload", "2 months ago"],
  ["file", "Aula-04-06-11-2024.txt", "Add files via upload", "2 months ago"],
  ["file", "Aula-05-08-11-2024.txt", "Add files via upload", "2 months ago"],
  ["file", "Aula-06-11-11-2024.txt", "Add files via upload", "2 months ago"],
  ["file", "Aula-Lousa-01-11-2024.pdf", "Add files via upload", "2 months ago"],
];

function Avatar() {
  return (
    <svg viewBox="0 0 20 20" className="relative top-px size-5 shrink-0">
      <defs><clipPath id="av"><circle cx="10" cy="10" r="10" /></clipPath></defs>
      <g clipPath="url(#av)">
        <rect width="20" height="20" fill="#f0eef5" />
        <path d="M1.500 4.500H5V14.500H1.500ZM15 4.500h3.500v10H15ZM8 4.500h4v7H8ZM5 12h3v3H5ZM12 12h3v3h-3ZM8 14h4v2H8ZM6 16.500h2.500V20H6ZM11.500 16.500H14V20h-2.500Z" fill="#a68be0" />
        <path d="M9.200 6.500h1.600V10H9.200Z" fill="#f0eef5" />
      </g>
    </svg>
  );
}

function FileTable() {
  return (
    <div className="mt-4 rounded-t-[6px] border border-b-0 border-[#3d444d]">
      <div className="flex h-[53px] items-center rounded-t-[5px] border-b border-[#3d444d] bg-[#151b23] pr-[21px] pl-[13px]">
        <Avatar />
        <span className="ml-2 pt-[2px] text-sm font-bold text-[#f0f6fc]">nicollas007</span>
        <span className="ml-2 pt-[2px] text-sm text-[#9198a1]">Create README.md</span>
        <span className="mr-[17px] ml-auto text-xs text-[#9198a1]">c9dbe6e · 5 minutes ago</span>
        <Oct name="history" className="text-[#9198a1]" />
      </div>
      {rows.map(([icon, name, msg, when]) => (
        <div key={name} className="flex h-[41px] items-center border-b border-[#3d444d] px-4 text-sm text-[#9198a1]">
          <Oct name={icon} />
          <span className="ml-[10px] w-[245px] pt-[2px] text-[#f0f6fc]">{name}</span>
          <span className="pt-[2px]">{msg}</span>
          <span className="ml-auto pt-[2px]">{when}</span>
        </div>
      ))}
    </div>
  );
}

function Topic({ children, className = "" }) {
  return <span className={`flex h-6 items-center rounded-full bg-[#121d2f] px-[11px] pb-px text-xs text-[#4493f8] ${className}`}>{children}</span>;
}

const meta = [["book", null, "Readme"], ["law", null, "MIT license"], ["pulse", null, "Activity"], ["star", "1", "star"], ["eye", "1", "watching"], ["fork", "0", "forks"]];

function Sidebar() {
  return (
    <div className="ml-6 w-60 shrink-0 text-[#9198a1]">
      <div className="mt-3 flex h-6 items-center justify-between">
        <h2 className="text-base font-bold text-[#f0f6fc]">About</h2>
        <Oct name="gear" />
      </div>
      <p className="mt-4 text-base leading-6 whitespace-nowrap text-[#f0f6fc]">Repositório das aulas do<br />técnico em informática do<br />SENAC do tatuapé.</p>
      <div className="mt-4 flex flex-col gap-1">
        <div className="flex gap-[5px]"><Topic>senac</Topic><Topic className="tracking-[-0.02px]">tecnicoeminformatica</Topic></div>
        <div className="flex gap-1"><Topic>senac-tat</Topic><Topic>senac-tatuape</Topic></div>
        <div className="flex"><Topic>senac-sp</Topic></div>
      </div>
      <div className="mt-4 flex flex-col">
        {meta.map(([icon, n, label]) => (
          <div key={label} className="flex h-[29px] items-center text-sm">
            <Oct name={icon} className="relative top-px" />
            <span className="ml-3">{n && <b>{n} </b>}{label}</span>
          </div>
        ))}
      </div>
      <div className="mt-3 border-t border-[#2b3138] pt-[16px]">
        <h2 className="text-base font-bold text-[#f0f6fc]">Releases</h2>
        <p className="mt-4 text-xs leading-[18px]">No releases published</p>
        <p className="text-xs leading-[18px]"><span className="inline-block h-[17px] border-b border-[#4493f8] text-[#4493f8]">Create a new release</span></p>
      </div>
      <div className="mt-4 border-t border-[#2b3138] pt-[16px]">
        <h2 className="text-base font-bold text-[#f0f6fc]">Packages</h2>
        <p className="mt-4 text-xs leading-[18px]">No packages published</p>
      </div>
    </div>
  );
}

function Page() {
  const btn = "flex h-8 items-center rounded-md border border-[#3d444d] bg-[#212830]";
  return (
    <div className="flex min-h-0 flex-1 overflow-hidden bg-[#0d1117] pl-6 font-['Noto_Sans',sans-serif]">
      <div className="w-[679px] shrink-0 pt-2">
        <div className="flex items-center text-[#9198a1]">
          <div className={`${btn} w-[107px] pl-3`}>
            <Oct name="branch" />
            <span className="ml-2 w-[33px] text-sm text-[#f0f6fc]">main</span>
            <Oct name="down" className="ml-2" />
          </div>
          <Oct name="branch" className="ml-[21px]" />
          <Oct name="tag" className="ml-[26px]" />
          <div className={`${btn} ml-auto w-[85px] justify-center`}><span className="text-sm whitespace-nowrap text-[#f0f6fc]">Go to file</span></div>
          <div className={`${btn} ml-2 w-8 justify-center`}><Oct name="plus" /></div>
          <div className="ml-2 flex h-8 w-[108px] items-center rounded-md border border-[#2f9a42] bg-[#238636] pl-3 text-white">
            <Oct name="code" />
            <span className="ml-2 w-[35px] text-sm">Code</span>
            <Oct name="down" className="ml-2" />
          </div>
        </div>
        <FileTable />
      </div>
      <Sidebar />
      <div className="ml-auto flex w-2 shrink-0 flex-col bg-[#424242]">
        <svg viewBox="0 0 8 84" className="h-[84px] w-2"><path d="M4 10.500 8 6v4.500Z" fill="#fff" /></svg>
        <div className="ml-[2px] h-[229px] bg-[#686868]" />
        <svg viewBox="0 0 8 10" className="mt-auto h-[10px] w-2"><path d="M4 0h4v5Z" fill="#fff" /></svg>
      </div>
    </div>
  );
}

/* ---------- panel ---------- */

function FolderIcon() {
  return (
    <svg viewBox="0 0 28 26" className="h-[26px] w-7">
      <path d="M0 1.500Q0 0 1.500 0H8.500L12 2.500H27Q28 2.500 28 4V14H0Z" fill="#27913c" />
      <rect x="2" y="5.500" width="24" height="4" rx="1" fill="#f3f3f3" />
      <path d="M0 7.500H28V24Q28 25.500 26.500 25.500H1.500Q0 25.500 0 24Z" fill="#50c46f" />
    </svg>
  );
}

function FirefoxIcon() {
  return (
    <svg viewBox="0 0 28 28" className="size-7">
      <defs><linearGradient id="ff" x2="0" y2="1"><stop stopColor="#ff7b3c" /><stop offset="1" stopColor="#ff3b5f" /></linearGradient></defs>
      <rect width="28" height="28" rx="5" fill="url(#ff)" />
      <path d="M4.200 14.500c0-3 .8-5 2.300-7l1.500 3c1-.8 2-1 3.200-.8.5-2 2.300-3.600 5.800-5.700 0 2.500 1.500 3.600 3.200 5.500l.6-1.500c2.200 2 3.200 4.500 3.200 6.500a9.900 9.900 0 0 1-19.800 0Z" fill="#fff" />
      <path d="M9.600 12.200l3.400.6 2.600-.4c.8-.9.400-1.700-.4-2.600 3 .4 4.300 2.600 4.300 5 0 2.600-2.200 4.600-5 4.600-2.900 0-5.400-2-5.400-5.200Z" fill="#ff5350" />
      <path d="M9 14.800q2.500.8 4.500-.6l-3-1.700Z" fill="#fff" />
    </svg>
  );
}

function Panel() {
  return (
    <div className="absolute inset-x-0 bottom-0 flex h-[41px] border-t border-[#2a2a2a] bg-[#1a1a1a]">
      <div className="flex w-[52px] items-center pl-[6px]"><SiLinuxmint className="size-8 text-[#dcdcdc]" /></div>
      <span className="my-px w-px bg-[#3a3a3a]" />
      <div className="ml-[13px] flex items-center pb-[2px]"><FolderIcon /></div>
      <div className="ml-4 flex items-center pb-[2px]"><FirefoxIcon /></div>
      <div className="ml-4 flex items-center pb-[2px]">
        <div className="size-7 rounded-[5px] border border-[#454545] bg-linear-to-b from-[#353535] to-[#202020]">
          <span className="block pt-[1px] pl-[3px] font-['DejaVu_Sans_Mono',monospace] text-[8px] leading-[10px] font-bold whitespace-nowrap text-[#eee]">$_</span>
        </div>
      </div>
      <div className="ml-[11px] flex w-[38px] items-center justify-center border-b-2 border-[#35a854] bg-[#5a5a5a]">
        <ChromeIcon id="pc" className="size-7" c={chromeColors} />
      </div>
      <div className="relative ml-[6px] flex w-[38px] items-center justify-center border-b-2 border-[#35a854]">
        <svg viewBox="0 0 28 28" className="size-7">
          <defs><linearGradient id="cam" x2="0" y2="1"><stop stopColor="#4670ae" /><stop offset="1" stopColor="#264f8d" /></linearGradient></defs>
          <rect width="28" height="28" rx="5" fill="url(#cam)" />
          <rect x="13" y="6" width="8" height="1.500" fill="#fff" /><rect x="4" y="8" width="20" height="14.500" rx="1.500" fill="#fff" />
          <circle cx="17" cy="15" r="3.600" fill="none" stroke="#3561a0" strokeWidth="1.400" /><rect x="7" y="10" width="3.500" height="1.300" fill="#3561a0" />
        </svg>
        <span className="absolute top-[1px] left-[1px] flex h-[13px] w-4 items-center justify-center rounded-full bg-[#35a854] font-['Noto_Sans',sans-serif] text-[10px] leading-none font-bold text-white">2</span>
      </div>
      <div className="ml-auto flex items-center">
        <svg viewBox="0 0 17 17" className="w-[17px]">
          <path d="M8.500.5 16 3q.5 8.500-7.500 13Q0 12 1 3Z" fill="#ddd" /><path d="M8.500 2.800v10.800Q3.400 10.500 3.300 4.600Z" fill="#333" /><path d="M8.500 2.800v10.800q5.100-3.100 5.200-9Z" fill="#777" /><circle cx="13.500" cy="13" r="3.200" fill="#f37735" />
        </svg>
        <svg viewBox="0 0 14 16" className="ml-[13px] h-4 w-[14px]"><rect x="1" y="1" width="12" height="14" rx="1" fill="none" stroke="#ddd" strokeWidth="2" /><path d="M4 8l3-3 3 3ZM4 9.200h6v1.300H4Z" fill="#ddd" /></svg>
        <svg viewBox="0 0 16 16" className="ml-[13px] size-4" fill="#ddd"><path d="M5 0h6v5H9v2.300h6V11h1v5h-6v-5h2.500V9h-9v2H6v5H0v-5h1V7.300h6V5H5Z" /></svg>
        <svg viewBox="0 0 17 16" className="ml-3 h-4 w-[17px]"><path d="M0 5h3l4.500-4.500v15L3 11H0Z" fill="#ddd" /><path d="M9.500 4q3 4 0 8" fill="none" stroke="#ddd" strokeWidth="1.800" /><path d="M12.700 1.800q5 6.200 0 12.400" fill="none" stroke="#666" strokeWidth="1.800" /></svg>
        <span className="ml-[10px] w-[35px] text-[12.5px] font-bold tracking-[0.35px] whitespace-nowrap text-[#dcdcdc]">17:10</span>
        <span className="ml-[5px] h-full w-[10px] bg-[#2d2d2d]" />
      </div>
    </div>
  );
}

export default function App() {
  return (
    <div className="relative h-[794px] w-[1600px] overflow-hidden bg-[#131313] font-['Open_Sans','Noto_Sans',sans-serif]">
      <Wallpaper />

      <DesktopItem pos="left-[20px] top-[35px]" icon={<SlimjetIcon />} lines={[["FlashPeak Slimjet", "tracking-[-0.05px]"]]} />
      <DesktopItem pos="left-[150px] top-[35px]" icon={<OperaIcon />} lines={[["Opera", ""]]} />
      <DesktopItem pos="left-[280px] top-[35px]" icon={<ChromeIcon id="gc" className="size-10" c={chromeColors} />} lines={[["Google Chrome", ""]]} />
      <DesktopItem pos="left-[20px] top-[135px]" icon={<BraveIcon />} lines={[["Brave Web", "tracking-[-0.2px]"], ["Browser", "tracking-[-0.1px]"]]} />
      <DesktopItem pos="left-[150px] top-[135px]" icon={<VivaldiIcon />} lines={[["Vivaldi", ""]]} />
      <DesktopItem pos="left-[280px] top-[135px]" icon={<ChromeIcon id="cr" className="size-10" c={chromiumColors} />} lines={[["Navegador de", ""], ["Internet Chromi…", "tracking-[0.15px]"]]} />
      <DesktopItem pos="left-[20px] top-[235px]" icon={<EdgeIcon />} lines={[["Microsoft Edge", "tracking-[0.08px]"]]} />
      <DesktopItem pos="left-[20px] top-[635px]" icon={<TrashIcon />} lines={[["Lixeira", ""]]} />

      <div className="absolute top-[203px] left-[595px] h-[342px] w-10 rounded-[8px] border border-[#0a0a0a] bg-[#2d2d2d]">
        <div className="h-[46px] rounded-t-[8px] border-b border-[#1c1c1c] bg-[#262626]" />
      </div>

      <div className="absolute top-[25px] left-[600px] flex h-[692px] w-[1010px] flex-col rounded-t-[10px] border border-[#050505] bg-[#3b3b3b] shadow-[0_2px_14px_rgba(0,0,0,0.6)]">
        <div className="flex min-h-0 w-[999px] flex-1 flex-col">
          <TabStrip />
          <Toolbar />
          <Page />
        </div>
      </div>

      <Panel />
    </div>
  );
}
